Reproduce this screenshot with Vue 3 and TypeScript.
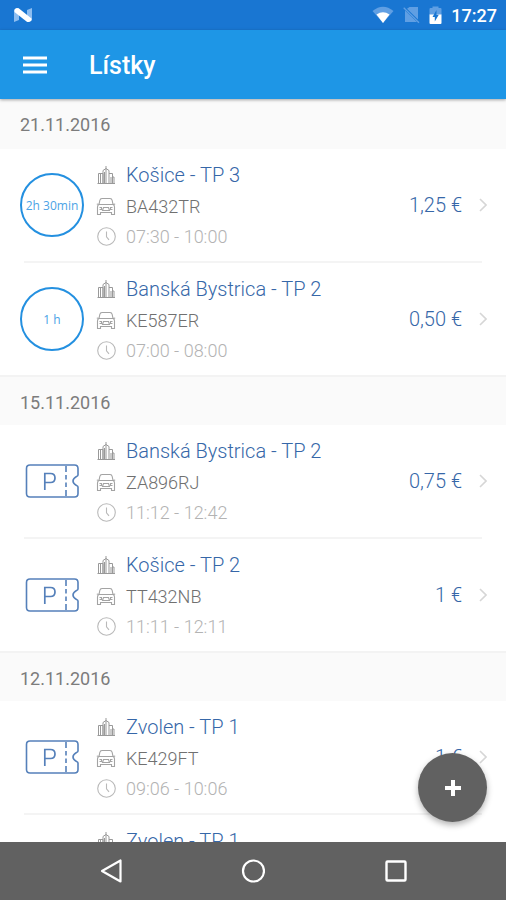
<script setup lang="ts">
interface Ticket {
  id: number
  zone: string
  plate: string
  time: string
  price: string
  remaining?: string
}

interface TicketGroup {
  date: string
  tickets: Ticket[]
}

const groups: TicketGroup[] = [
  {
    date: '21.11.2016',
    tickets: [
      { id: 1, zone: 'Košice - TP 3', plate: 'BA432TR', time: '07:30 - 10:00', price: '1,25 €', remaining: '2h 30min' },
      { id: 2, zone: 'Banská Bystrica - TP 2', plate: 'KE587ER', time: '07:00 - 08:00', price: '0,50 €', remaining: '1 h' },
    ],
  },
  {
    date: '15.11.2016',
    tickets: [
      { id: 3, zone: 'Banská Bystrica - TP 2', plate: 'ZA896RJ', time: '11:12 - 12:42', price: '0,75 €' },
      { id: 4, zone: 'Košice - TP 2', plate: 'TT432NB', time: '11:11 - 12:11', price: '1 €' },
    ],
  },
  {
    date: '12.11.2016',
    tickets: [
      { id: 5, zone: 'Zvolen - TP 1', plate: 'KE429FT', time: '09:06 - 10:06', price: '1 €' },
      { id: 6, zone: 'Zvolen - TP 1', plate: '', time: '', price: '' },
    ],
  },
]
</script>

<template>
  <div class="screen" lang="sk">
    <div class="status">
      <svg class="status-logo" width="20" height="16" viewBox="0 0 20 16" aria-hidden="true">
        <path d="M1 3 6 1v12l-5 2zM14 3l5-2v12l-5 2z" fill="#8dbdf0" />
        <path d="M1.500 2.500Q3.500 .2 6 1.500L18.500 11.500v2Q16 16 13.500 14.500L1.500 5z" fill="#fff" />
      </svg>
      <div class="status-right">
        <svg width="22" height="18" viewBox="0 0 22 18" aria-hidden="true">
          <path d="M.5 5Q11-3.500 21.500 5L11 17z" fill="#609fe3" />
          <path d="M4.500 8.500Q11 4 17.500 8.500L11 17z" fill="#fff" />
        </svg>
        <svg width="17" height="18" viewBox="0 0 17 18" aria-hidden="true">
          <path d="M6.500 1H15v12.500L4 2.800zM2 4.500 14 16H2z" fill="#609fe3" />
          <path d="M.7 1.700 16 16.700" stroke="#609fe3" stroke-width="1.300" />
        </svg>
        <svg width="13" height="18" viewBox="0 0 13 18" aria-hidden="true">
          <path d="M3.500 2V.5h6V2h2q1 0 1 1v6H.5V3q0-1 1-1z" fill="#609fe3" />
          <path d="M.5 8.500h12V17q0 1-1 1h-10q-1 0-1-1z" fill="#fff" />
          <path d="M7.500 4 3.500 11h2.300v4.500L9.800 8.800H7.500z" fill="#1976d2" />
        </svg>
        <span class="clock">17:27</span>
      </div>
    </div>

    <header class="toolbar">
      <button class="icon-button" type="button" aria-label="Menu">
        <svg width="24" height="18" viewBox="0 0 24 18" aria-hidden="true">
          <path d="M0 2h24M0 9h24M0 16h24" stroke="#fff" stroke-width="2.800" />
        </svg>
      </button>
      <h1>Lístky</h1>
    </header>

    <main class="list">
      <section v-for="group in groups" :key="group.date" class="group">
        <h2>{{ group.date }}</h2>
        <ul>
          <li v-for="ticket in group.tickets" :key="ticket.id">
            <a class="ticket" href="#">
              <span class="lead">
                <span v-if="ticket.remaining" class="ring">{{ ticket.remaining }}</span>
                <svg v-else width="54" height="34" viewBox="0 0 54 34" fill="none" stroke="#5580ba" stroke-width="1.600" aria-hidden="true">
                  <path d="M5 1H49.500Q53 1 53 4.500V11Q53 12 51.500 12.500Q48 14.500 48 17T51.500 21.500Q53 22 53 23V29.500Q53 33 49.500 33H5Q1.500 33 1.500 29.500V4.500Q1.500 1 5 1Z" />
                  <path d="M41 2v6M41 11v4.500M41 18.500v4.500M41 26v6" />
                  <path d="M19.800 26V9.500H25.500Q30 9.500 30 14T25.500 18.500H20" stroke-width="1.700" />
                </svg>
              </span>
              <span class="details">
                <span class="line zone">
                  <svg width="20" height="20" viewBox="0 0 20 20" fill="none" stroke="#999" stroke-width="1" aria-hidden="true">
                    <path d="M2.500 18.500V8.500H7V18.500M4.500 9v9.500M7 18.500V5.500L10 3.500 13 5.500V18.500M10 1v17M8.500 7v11M13 8.500h3.500V18.500M15 12v6M16.500 12H18v6.500M1.500 18.500H19" />
                  </svg>
                  {{ ticket.zone }}
                </span>
                <span class="line plate">
                  <svg width="20" height="20" viewBox="0 0 20 20" fill="none" stroke="#a3a3a3" stroke-width="1.100" aria-hidden="true">
                    <path d="M3 8.500 3.800 4.500Q4.200 2.500 6 2.500h8Q15.800 2.500 16.200 4.500L17 8.500M3 8.500Q1.500 9 1.500 11v7.500h3V16.500h11v2h3V11Q18.500 9 17 8.500M3 8.500H17M.8 8 3 8.500M19.200 8 17 8.500" />
                    <path d="M6.500 14.500 7.500 11.500h5l1 3zM3.500 11.500h2v2h-2M16.500 11.500h-2v2h2" />
                  </svg>
                  {{ ticket.plate }}
                </span>
                <span class="line time">
                  <svg width="20" height="20" viewBox="0 0 20 20" fill="none" stroke="#b9b9b9" stroke-width="1.100" aria-hidden="true">
                    <circle cx="10.500" cy="10.500" r="8.800" />
                    <path d="M10.500 5.500v5.300l2.500 3" />
                  </svg>
                  {{ ticket.time }}
                </span>
              </span>
              <span class="price">{{ ticket.price }}</span>
              <svg class="chevron" width="8" height="14" viewBox="0 0 8 14" aria-hidden="true">
                <path d="M1 1l6 6-6 6" fill="none" stroke="#d6d6d6" stroke-width="1.600" />
              </svg>
            </a>
          </li>
        </ul>
      </section>
    </main>

    <button class="fab" type="button" aria-label="Pridať">
      <svg width="18" height="18" viewBox="0 0 18 18" aria-hidden="true">
        <path d="M9 1v16M1 9h16" stroke="#fff" stroke-width="4" />
      </svg>
    </button>

    <nav class="system-nav">
      <button type="button" aria-label="Späť">
        <svg width="24" height="24" viewBox="0 0 24 24" aria-hidden="true">
          <path d="M21.500 1.500v21L3 12z" fill="none" stroke="#fff" stroke-width="2.200" stroke-linejoin="round" />
        </svg>
      </button>
      <button type="button" aria-label="Domov">
        <svg width="24" height="24" viewBox="0 0 24 24" aria-hidden="true">
          <circle cx="12.500" cy="12" r="10.500" fill="none" stroke="#fff" stroke-width="2.200" />
        </svg>
      </button>
      <button type="button" aria-label="Prehľad">
        <svg width="24" height="24" viewBox="0 0 24 24" aria-hidden="true">
          <rect x="3.500" y="2.500" width="19" height="19" rx="1" fill="none" stroke="#fff" stroke-width="2.400" />
        </svg>
      </button>
    </nav>
  </div>
</template>

<style>
body {
  margin: 0;
}
</style>

<style scoped>
.screen {
  position: relative;
  display: flex;
  flex-direction: column;
  height: 100vh;
  overflow: hidden;
  background: #fff;
  font-family: Roboto, "Noto Sans", sans-serif;
}

svg {
  display: block;
  flex: none;
}

button {
  display: grid;
  place-items: center;
  padding: 0;
  border: 0;
  background: none;
  cursor: pointer;
}

.status {
  display: flex;
  flex: none;
  align-items: center;
  justify-content: space-between;
  height: 30px;
  padding: 0 9px 0 13px;
  background: #1976d2;
}

.status-right {
  display: flex;
  align-items: center;
  gap: 9px;
}

.clock {
  color: #fff;
  font-size: 18px;
  font-weight: 500;
}

.toolbar {
  position: relative;
  display: flex;
  flex: none;
  align-items: center;
  gap: 30px;
  height: 69px;
  padding: 0 11px;
  background: #1e96e6;
  box-shadow: 0 1px 3px rgba(0, 0, 0, 0.35);
}

.icon-button {
  width: 48px;
  height: 48px;
}

h1 {
  margin: 0;
  padding-top: 2px;
  color: #fff;
  font-size: 25px;
  font-weight: 500;
}

.list {
  flex: 1;
  min-height: 0;
  overflow-y: auto;
  scrollbar-width: none;
}

h2 {
  box-sizing: border-box;
  height: 50px;
  margin: 0;
  padding: 0 20px;
  border-top: 2px solid #f3f3f3;
  background: #fafafa;
  color: #7c7c7c;
  font-size: 18px;
  font-weight: 400;
  line-height: 51px;
}

.group:first-child h2 {
  border-top: 0;
}

ul {
  margin: 0;
  padding: 0;
  list-style: none;
}

li + li::before {
  content: "";
  display: block;
  height: 2px;
  margin: 0 24px;
  background: #f4f4f4;
}

.ticket {
  display: flex;
  align-items: center;
  height: 112px;
  padding: 0 19px 0 20px;
  color: inherit;
  text-decoration: none;
}

.lead {
  display: grid;
  flex: none;
  place-items: center;
  width: 64px;
  margin-right: 12px;
}

.ring {
  display: grid;
  box-sizing: border-box;
  place-items: center;
  width: 64px;
  height: 64px;
  border: 2px solid #2490e0;
  border-radius: 50%;
  color: #4ba3e6;
  font-family: "Open Sans", sans-serif;
  font-size: 12px;
  white-space: nowrap;
}

.details {
  display: grid;
  flex: 1;
  min-width: 0;
}

.line {
  display: flex;
  align-items: center;
  gap: 10px;
  height: 30px;
  white-space: nowrap;
}

.zone {
  height: 32px;
  color: #3667a8;
  font-size: 20px;
  font-weight: 300;
}

.plate {
  color: #707070;
  font-size: 18px;
  font-weight: 300;
}

.time {
  color: #b3b3b3;
  font-size: 18px;
  font-weight: 300;
}

.price {
  color: #3667a8;
  font-size: 20px;
  font-weight: 300;
}

.chevron {
  margin-left: 17px;
}

.fab {
  position: absolute;
  right: 19px;
  bottom: 78px;
  width: 69px;
  height: 69px;
  border-radius: 50%;
  background: #616161;
  box-shadow: 0 3px 6px rgba(0, 0, 0, 0.3);
}

.system-nav {
  display: flex;
  flex: none;
  align-items: center;
  justify-content: center;
  gap: 94px;
  height: 58px;
  background: #616161;
}

.system-nav button {
  width: 48px;
  height: 48px;
}
</style>
